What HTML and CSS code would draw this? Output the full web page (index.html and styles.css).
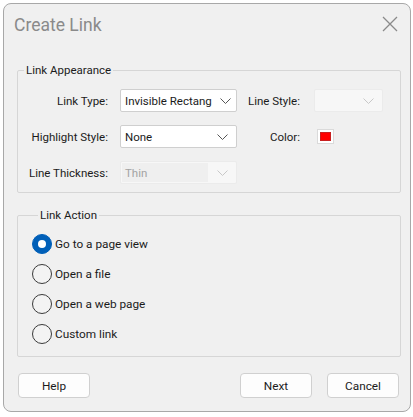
FILE: index.html
```html
<!DOCTYPE html>
<html>
<head>
<meta charset="utf-8">
<link rel="stylesheet" href="styles.css">
</head>
<body>
<div class="dialog">
  <div class="titlebar">
    <span class="title">Create Link</span>
    <svg class="close" width="16" height="16" viewBox="0 0 16 16"><path d="M1 1L15 15M15 1L1 15" stroke="#8a8a8a" stroke-width="1.3" fill="none"/></svg>
  </div>
  <fieldset class="group appearance">
    <legend>Link Appearance</legend>
    <div class="grid">
      <label class="lbl">Link Type:</label>
      <div class="select"><span class="val">Invisible Rectang</span><span class="chev"><svg width="11" height="6" viewBox="0 0 11 6"><path d="M0.5 0.5L5.5 5.5L10.5 0.5" stroke="#555" fill="none"/></svg></span></div>
      <label class="lbl">Line Style:</label>
      <div class="select disabled"><span class="val"></span><span class="chev"><svg width="11" height="6" viewBox="0 0 11 6"><path d="M0.5 0.5L5.5 5.5L10.5 0.5" stroke="#c8c8c8" fill="none"/></svg></span></div>

      <label class="lbl">Highlight Style:</label>
      <div class="select"><span class="val">None</span><span class="chev"><svg width="11" height="6" viewBox="0 0 11 6"><path d="M0.5 0.5L5.5 5.5L10.5 0.5" stroke="#555" fill="none"/></svg></span></div>
      <label class="lbl">Color:</label>
      <div class="swatch"><span class="swatch-fill"></span></div>

      <label class="lbl">Line Thickness:</label>
      <div class="select disabled thick"><span class="val">Thin</span><span class="chev"><svg width="11" height="6" viewBox="0 0 11 6"><path d="M0.5 0.5L5.5 5.5L10.5 0.5" stroke="#c8c8c8" fill="none"/></svg></span></div>
    </div>
  </fieldset>
  <fieldset class="group action">
    <legend>Link Action</legend>
    <div class="radios">
      <div class="radio-row"><span class="radio checked"></span><span class="rlabel">Go to a page view</span></div>
      <div class="radio-row"><span class="radio"></span><span class="rlabel">Open a file</span></div>
      <div class="radio-row"><span class="radio"></span><span class="rlabel">Open a web page</span></div>
      <div class="radio-row"><span class="radio"></span><span class="rlabel">Custom link</span></div>
    </div>
  </fieldset>
  <div class="buttons">
    <button class="btn">Help</button>
    <span class="spacer"></span>
    <button class="btn">Next</button>
    <button class="btn">Cancel</button>
  </div>
</div>
</body>
</html>
```
FILE: styles.css
```css
* { box-sizing: border-box; }
html, body { margin: 0; padding: 0; }
body {
  background: #ffffff;
  width: 413px;
  height: 417px;
  overflow: hidden;
  font-family: Roboto, "Noto Sans", sans-serif;
  color: #1b1b1b;
}
.dialog {
  margin: 3px 0 0 3px;
  width: 408px;
  height: 409px;
  background: #f0f0f0;
  border: 1px solid #a8a8a8;
  border-radius: 8px;
  padding: 0 9px 0 13px;
  display: flex;
  flex-direction: column;
}
.titlebar {
  height: 40px;
  display: flex;
  align-items: center;
  justify-content: space-between;
  padding-right: 3px;
}
.title {
  font-size: 17.5px;
  color: #8a8a8a;
  margin-left: -3px;
  margin-top: 1px;
}
.close { display: block; }
.group {
  margin: 18px 0 0 0;
  border: 1px solid #d6d6d6;
  border-radius: 2px;
  padding: 11px 0 8px 0;
  min-width: 0;
}
.group legend {
  font-size: 11.5px;
  line-height: 16px;
  padding: 0 2px;
  margin-left: 6px;
  color: #1b1b1b;
}
.grid {
  display: grid;
  grid-template-columns: 90px 117px 51px 71px;
  grid-auto-rows: 23px;
  column-gap: 12px;
  row-gap: 13px;
}
.grid > :nth-child(4) { margin-left: 2px; }
.lbl {
  font-size: 11.5px;
  display: flex;
  align-items: center;
  justify-content: flex-end;
  white-space: nowrap;
}
.select {
  display: flex;
  align-items: center;
  background: #ffffff;
  border: 1px solid #cfcfcf;
  border-radius: 2px;
  font-size: 11.5px;
}
.select .val {
  flex: 1;
  white-space: nowrap;
  padding-left: 4px;
  height: 100%;
  display: flex;
  align-items: center;
}
.select .chev {
  width: 28px;
  flex: none;
  display: flex;
  align-items: center;
  justify-content: center;
}
.select .chev svg { display: block; }
.select.disabled {
  background: #f7f7f7;
  border-color: #ebebeb;
}
.select.thick .val {
  background: #efefef;
  color: #a3a3a3;
  margin: 1px 0 1px 1px;
  padding-left: 3px;
  height: auto;
  align-self: stretch;
}
.swatch {
  align-self: center;
  width: 17px;
  height: 15px;
  border: 1px solid #dadada;
  background: #ffffff;
  padding: 2px;
  display: flex;
  margin-left: 5px;
}
.swatch-fill {
  flex: 1;
  background: #ff0000;
  border: 1px solid #c82020;
}
.action { margin-top: 14px; padding: 6px 0 7px 14px; }
.radios { display: flex; flex-direction: column; }
.radio-row {
  height: 30px;
  display: flex;
  align-items: center;
  gap: 3px;
}
.radio {
  width: 20px;
  height: 20px;
  border-radius: 50%;
  border: 1px solid #3a3a3a;
  background: #f3f3f3;
  flex: none;
  display: flex;
  align-items: center;
  justify-content: center;
}
.radio.checked {
  background: #005fb8;
  border-color: #005fb8;
}
.radio.checked::after {
  content: "";
  width: 8px;
  height: 8px;
  border-radius: 50%;
  background: #ffffff;
}
.rlabel { font-size: 11.8px; }
.buttons {
  margin-top: 16px;
  display: flex;
  gap: 15px;
  padding: 0 2px 0 1px;
}
.spacer { flex: 1; }
.btn {
  width: 72px;
  height: 25px;
  background: #fdfdfd;
  border: 1px solid #d0d0d0;
  border-radius: 4px;
  font-family: Roboto, "Noto Sans", sans-serif;
  font-size: 11.8px;
  color: #1b1b1b;
  padding: 0;
}
```
